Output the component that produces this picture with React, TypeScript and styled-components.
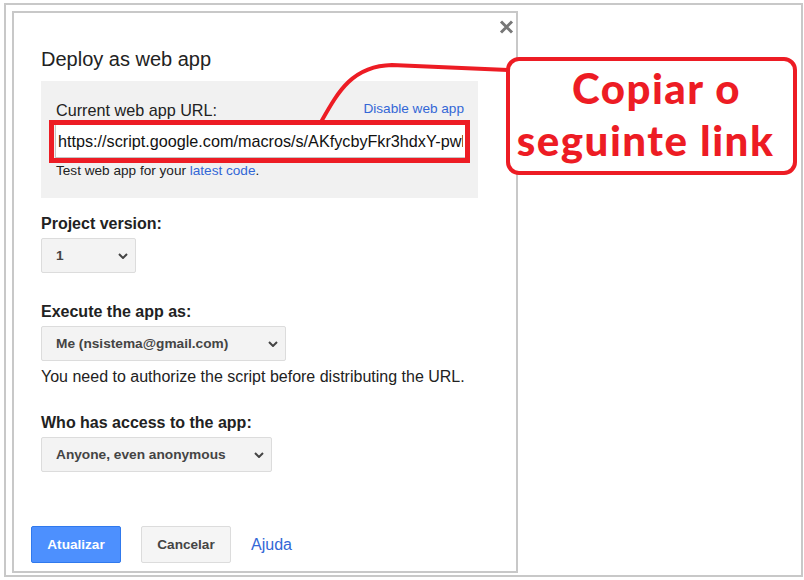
import React from "react";
import styled, { createGlobalStyle } from "styled-components";

const GlobalStyle = createGlobalStyle`
  html, body { margin: 0; padding: 0; background: #ffffff; }
  body { font-family: "Liberation Sans", Arial, sans-serif; color: #222; }
`;

const Page = styled.div`
  position: relative;
  width: 804px;
  height: 580px;
  box-sizing: border-box;
  padding: 3px 0 0 4px;
`;

const Frame = styled.div`
  width: 799px;
  height: 574px;
  box-sizing: border-box;
  border: 2px solid #c8c8c8;
  padding: 6px;
`;

const Dialog = styled.div`
  position: relative;
  width: 506px;
  height: 562px;
  box-sizing: border-box;
  border: 2px solid #c8c8c8;
  padding: 34px 17px 8px 17px;
  display: flex;
  flex-direction: column;
  background: #fff;
`;

const CloseButton = styled.div`
  position: absolute;
  top: 7px;
  right: 2px;
  width: 15px;
  height: 14px;
  display: flex;
`;

const Body = styled.div`
  padding-left: 10px;
  display: flex;
  flex-direction: column;
`;

const Title = styled.h1`
  margin: 0;
  font-size: 20px;
  line-height: 24px;
  font-weight: normal;
  color: #222;
`;

const Panel = styled.div`
  margin-top: 10px;
  width: 437px;
  box-sizing: border-box;
  padding: 20px 14px 19px 15px;
  background: #f1f1f1;
`;

const UrlHeader = styled.div`
  display: flex;
  justify-content: space-between;
  align-items: flex-start;
`;

const UrlLabel = styled.span`
  font-size: 16.2px;
  line-height: 19px;
  color: #222;
`;

const Link = styled.a<{ $size?: number; $lh?: number }>`
  color: #3367d6;
  text-decoration: none;
  font-size: ${(p) => (p.$size ? `${p.$size}px` : "inherit")};
  line-height: ${(p) => (p.$lh ? `${p.$lh}px` : "inherit")};
  cursor: pointer;
`;

const InputWrap = styled.div`
  position: relative;
  margin-top: 4px;
  margin-left: -1px;
  width: 411px;
`;

const UrlInput = styled.input`
  display: block;
  width: 100%;
  height: 34px;
  box-sizing: border-box;
  border: 1px solid #c4c4c4;
  background: #fff;
  padding: 0 2px;
  font-family: "Liberation Sans", Arial, sans-serif;
  font-size: 16.2px;
  color: #111;
  outline: none;
`;

const RedOutline = styled.div`
  position: absolute;
  top: -4px;
  left: -6px;
  right: -4px;
  bottom: -5px;
  border: 5px solid #ed1c24;
  pointer-events: none;
`;

const Hint = styled.div`
  margin-top: 5px;
  font-size: 13.6px;
  line-height: 16px;
  color: #222;
`;

const Section = styled.div<{ $gap: number }>`
  margin-top: ${(p) => p.$gap}px;
  display: flex;
  flex-direction: column;
  align-items: flex-start;
`;

const FieldLabel = styled.div`
  font-weight: bold;
  font-size: 16px;
  line-height: 19px;
  color: #222;
  margin-bottom: 5px;
`;

const Select = styled.div<{ $width: number }>`
  width: ${(p) => p.$width}px;
  height: 35px;
  box-sizing: border-box;
  background: #f3f3f3;
  border: 1px solid #dcdcdc;
  border-radius: 2px;
  display: flex;
  align-items: center;
  justify-content: space-between;
  padding: 0 7px 0 14px;
  font-weight: bold;
  font-size: 13.7px;
  color: #444;
`;

const Note = styled.div`
  margin-top: 6px;
  font-size: 16px;
  line-height: 19px;
  color: #222;
`;

const ButtonBar = styled.div`
  margin-top: auto;
  display: flex;
  align-items: center;
  gap: 20px;
`;

const Button = styled.button<{ $primary?: boolean }>`
  width: 90px;
  height: 37px;
  box-sizing: border-box;
  border-radius: 2px;
  border: 1px solid ${(p) => (p.$primary ? "#3079ed" : "#dcdcdc")};
  background: ${(p) => (p.$primary ? "#4d90fe" : "#f5f5f5")};
  color: ${(p) => (p.$primary ? "#ffffff" : "#444")};
  font-family: "Liberation Sans", Arial, sans-serif;
  font-weight: bold;
  font-size: 13.6px;
  line-height: 35px;
  padding: 0;
  cursor: pointer;
`;

const Connector = styled.svg`
  position: absolute;
  left: 0;
  top: 0;
  width: 804px;
  height: 580px;
  pointer-events: none;
`;

const Callout = styled.div`
  position: absolute;
  left: 506px;
  top: 57px;
  width: 291px;
  height: 118px;
  box-sizing: border-box;
  border: 4px solid #ed1c24;
  border-radius: 13px;
  padding-top: 1px;
  display: flex;
  flex-direction: column;
  align-items: center;
  font-family: Lato, "Open Sans", sans-serif;
  font-weight: 900;
  font-size: 42px;
  line-height: 52px;
  color: #ed1c24;
  background: #fff;
`;

const CalloutLine = styled.span<{ $shift?: number }>`
  display: block;
  white-space: nowrap;
  letter-spacing: 1.5px;
  transform: translateX(${(p) => p.$shift ?? 0}px);
`;

const Chevron = () => (
  <svg width="10" height="6" viewBox="0 0 10 6">
    <path d="M1 1 L5 5 L9 1" stroke="#444" strokeWidth="2" fill="none" />
  </svg>
);

export default function App() {
  return (
    <>
      <GlobalStyle />
      <Page>
        <Frame>
          <Dialog>
            <CloseButton>
              <svg width="15" height="14" viewBox="0 0 15 14">
                <path d="M2 1.5 L13 12.5 M13 1.5 L2 12.5" stroke="#777" strokeWidth="3" />
              </svg>
            </CloseButton>
            <Body>
              <Title>Deploy as web app</Title>
              <Panel>
                <UrlHeader>
                  <UrlLabel>Current web app URL:</UrlLabel>
                  <Link $size={13.6} $lh={16}>Disable web app</Link>
                </UrlHeader>
                <InputWrap>
                  <UrlInput
                    readOnly
                    value="https://script.google.com/macros/s/AKfycbyFkr3hdxY-pwl/exec"
                  />
                  <RedOutline />
                </InputWrap>
                <Hint>
                  Test web app for your <Link>latest code</Link>.
                </Hint>
              </Panel>
              <Section $gap={16}>
                <FieldLabel>Project version:</FieldLabel>
                <Select $width={95}>
                  <span>1</span>
                  <Chevron />
                </Select>
              </Section>
              <Section $gap={29}>
                <FieldLabel>Execute the app as:</FieldLabel>
                <Select $width={245}>
                  <span>Me (nsistema@gmail.com)</span>
                  <Chevron />
                </Select>
                <Note>You need to authorize the script before distributing the URL.</Note>
              </Section>
              <Section $gap={27}>
                <FieldLabel>Who has access to the app:</FieldLabel>
                <Select $width={231}>
                  <span>Anyone, even anonymous</span>
                  <Chevron />
                </Select>
              </Section>
            </Body>
            <ButtonBar>
              <Button $primary>Atualizar</Button>
              <Button>Cancelar</Button>
              <Link $size={16} $lh={19}>Ajuda</Link>
            </ButtonBar>
          </Dialog>
        </Frame>
        <Connector viewBox="0 0 804 580">
          <path
            d="M321 122 C 338 92, 352 66, 392 65 L 508 70"
            stroke="#ed1c24"
            strokeWidth="4"
            fill="none"
          />
        </Connector>
        <Callout>
          <CalloutLine $shift={5}>Copiar o</CalloutLine>
          <CalloutLine $shift={-6}>seguinte link</CalloutLine>
        </Callout>
      </Page>
    </>
  );
}
